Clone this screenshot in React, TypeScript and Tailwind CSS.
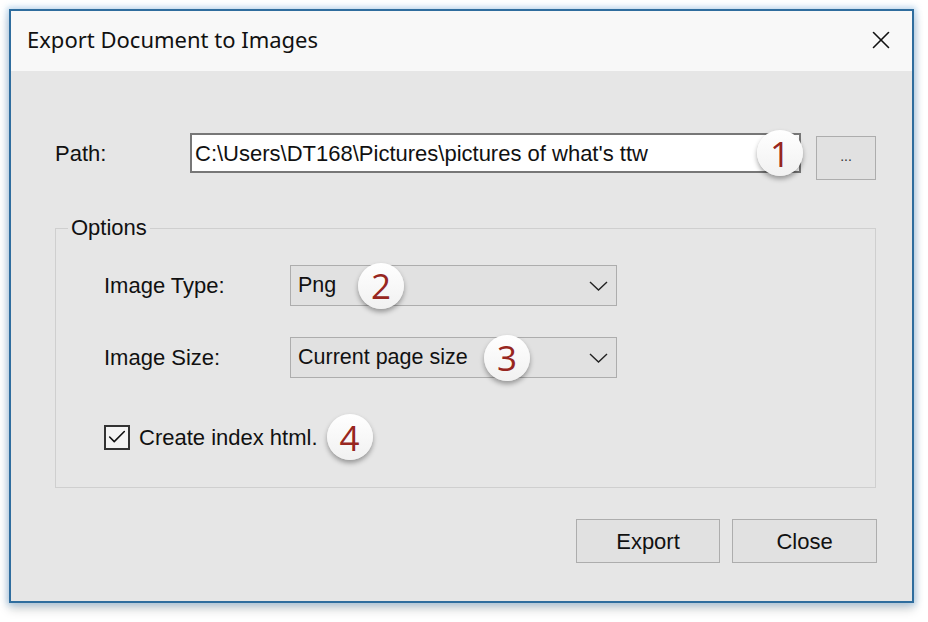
import { X, Check } from "lucide-react";

const ui = "font-['Liberation_Sans',Arial,sans-serif]";

function Badge({ n, className = "" }: { n: number; className?: string }) {
  return (
    <span
      className={`flex h-[46px] w-[46px] items-center justify-center rounded-full bg-gradient-to-b from-white to-[#f1f1f1] font-['Open_Sans',sans-serif] text-[35px] leading-none text-[#972620] shadow-[0_3px_5px_rgba(0,0,0,0.35)] ${className}`}
    >
      {n}
    </span>
  );
}

function Combo({ value, badge, badgeLeft }: { value: string; badge: number; badgeLeft: string }) {
  return (
    <div className="relative flex h-[41px] w-[327px] items-center border border-[#adadad] bg-[#e1e1e1] pl-[7px] pr-[8px]">
      <span className="flex-1 text-[21.5px] text-[#111]">{value}</span>
      <svg width="19" height="10" viewBox="0 0 19 10" className="text-[#222]">
        <polyline points="1,1 9.5,9 18,1" fill="none" stroke="currentColor" strokeWidth="1.4" />
      </svg>
      <Badge n={badge} className={`absolute top-1/2 -translate-y-1/2 ${badgeLeft}`} />
    </div>
  );
}

export default function App() {
  return (
    <div className={`min-h-[622px] bg-white pl-[9px] pt-[9px] ${ui}`}>
      <div className="flex h-[594px] w-[905px] flex-col border-2 border-[#2f6d9e] bg-[#e6e6e6] shadow-[0_0_6px_2px_rgba(110,170,220,0.45),0_6px_10px_rgba(0,0,0,0.18)]">
        {/* title bar */}
        <div className="flex h-[60px] items-center justify-between bg-[#f8f8f8] pb-[3px] pl-[16px] pr-[16px]">
          <span className="font-['Noto_Sans',sans-serif] text-[22px] text-[#111]">
            Export Document to Images
          </span>
          <X size={30} strokeWidth={1.3} className="text-[#111]" />
        </div>

        {/* body */}
        <div className="flex flex-1 flex-col pl-[44px] pr-[35px] pt-[62px]">
          <div className="flex items-start">
            <label className="flex h-[40px] w-[135px] items-center text-[22px] text-[#111]">
              Path:
            </label>
            <div className="relative flex h-[40px] w-[611px] items-center border-2 border-[#777] bg-white pl-[3px]">
              <span className="text-[22px] text-[#111]">
                C:\Users\DT168\Pictures\pictures of what's ttw
              </span>
              <Badge n={1} className="absolute right-[-4px] top-1/2 -translate-y-1/2" />
            </div>
            <button
              type="button"
              className="ml-[15px] mt-[3px] flex h-[44px] w-[60px] items-center justify-center border border-[#adadad] bg-[#e1e1e1] pb-[4px] text-[14px] text-[#333]"
            >
              ...
            </button>
          </div>

          <fieldset className="mr-[1px] mt-[36px] border border-[#cfcfcf] pb-[27px] pl-[48px]">
            <legend className="ml-[-36px] px-[3px] text-[22px] leading-[24px] text-[#111]">
              Options
            </legend>
            <div className="mt-[25px] flex items-center">
              <span className="w-[186px] text-[22px] text-[#111]">Image Type:</span>
              <Combo value="Png" badge={2} badgeLeft="left-[67px]" />
            </div>
            <div className="mt-[31px] flex items-center">
              <span className="w-[186px] text-[22px] text-[#111]">Image Size:</span>
              <Combo value="Current page size" badge={3} badgeLeft="left-[193px]" />
            </div>
            <div className="mt-[36px] flex h-[46px] items-center">
              <span className="flex h-[25px] w-[26px] items-center justify-center border-2 border-[#333] bg-[#f4f4f4]">
                <Check size={22} strokeWidth={1.7} className="text-[#111]" />
              </span>
              <span className="ml-[9px] text-[22px] text-[#111]">Create index html.</span>
              <Badge n={4} className="ml-[9px]" />
            </div>
          </fieldset>

          <div className="mt-[31px] flex justify-end gap-[12px]">
            <button
              type="button"
              className="h-[44px] w-[144px] border border-[#adadad] bg-[#e1e1e1] text-[22px] text-[#111]"
            >
              Export
            </button>
            <button
              type="button"
              className="h-[44px] w-[145px] border border-[#adadad] bg-[#e1e1e1] text-[22px] text-[#111]"
            >
              Close
            </button>
          </div>
        </div>
      </div>
    </div>
  );
}
